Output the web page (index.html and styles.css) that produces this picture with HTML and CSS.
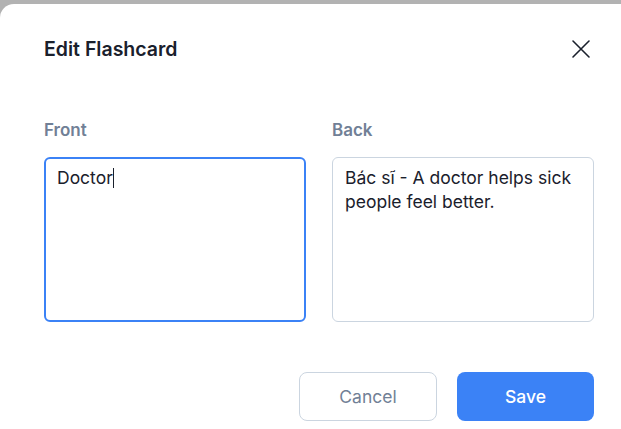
FILE: index.html
```html
<!DOCTYPE html>
<html lang="en">
<head>
<meta charset="utf-8">
<title>Edit Flashcard</title>
<link rel="stylesheet" href="styles.css">
</head>
<body>
<div class="modal">
  <div class="header">
    <h2 class="title">Edit Flashcard</h2>
    <button class="close" aria-label="Close">
      <svg width="20" height="20" viewBox="0 0 20 20" fill="none" stroke="#1a202c" stroke-width="1.6" stroke-linecap="round"><path d="M2 2L18 18M18 2L2 18"/></svg>
    </button>
  </div>
  <div class="fields">
    <div class="field">
      <div class="label">Front</div>
      <div class="input focused">Doctor<span class="caret"></span></div>
    </div>
    <div class="field">
      <div class="label">Back</div>
      <div class="input">Bác sĩ - A doctor helps sick people feel better.</div>
    </div>
  </div>
  <div class="footer">
    <button class="btn cancel">Cancel</button>
    <button class="btn save">Save</button>
  </div>
</div>
</body>
</html>
```
FILE: styles.css
```css
html, body {
  margin: 0;
  padding: 0;
  height: 100%;
}
body {
  background: #b2b2b2;
  overflow: hidden;
  font-family: Inter, "Noto Sans", sans-serif;
}
.modal {
  margin-top: 4px;
  height: calc(100% - 4px);
  background: #ffffff;
  border-top-left-radius: 14px;
  padding: 0 27px 0 44px;
  box-sizing: border-box;
}
.header {
  height: 90px;
  display: flex;
  align-items: center;
  justify-content: space-between;
}
.title {
  margin: 0;
  font-size: 19.5px;
  line-height: 24px;
  font-weight: 600;
  color: #1a202c;
}
.close {
  border: 0;
  background: none;
  padding: 0;
  width: 20px;
  height: 20px;
  margin-right: 3px;
  display: flex;
}
.fields {
  padding-top: 24px;
  display: grid;
  grid-template-columns: 262px 262px;
  column-gap: 26px;
}
.label {
  font-size: 17px;
  line-height: 24px;
  font-weight: 600;
  color: #718096;
  margin-bottom: 15px;
}
.input {
  height: 165px;
  box-sizing: border-box;
  border: 1px solid #cbd5e0;
  border-radius: 6px;
  padding: 8px 12px;
  font-size: 17.5px;
  line-height: 24px;
  color: #1a202c;
}
.input.focused {
  border: 2px solid #3b82f6;
  padding: 7px 11px;
}
.caret {
  display: inline-block;
  width: 1px;
  height: 20px;
  background: #1a202c;
  vertical-align: -4px;
}
.footer {
  margin-top: 50px;
  display: flex;
  justify-content: flex-end;
  gap: 20px;
}
.btn {
  height: 49px;
  border-radius: 8px;
  font-family: Inter, "Noto Sans", sans-serif;
  font-size: 17.5px;
  font-weight: 500;
  cursor: pointer;
}
.cancel {
  width: 138px;
  background: #ffffff;
  border: 1px solid #cbd5e0;
  color: #718096;
  font-weight: 400;
}
.save {
  width: 137px;
  background: #3b82f6;
  border: 0;
  color: #ffffff;
}
```
